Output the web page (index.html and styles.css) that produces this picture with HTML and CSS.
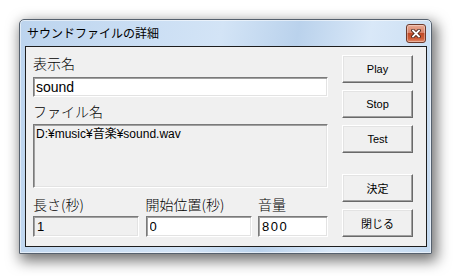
FILE: index.html
```html
<!DOCTYPE html>
<html lang="ja">
<head>
<meta charset="utf-8">
<title>サウンドファイルの詳細</title>
<link rel="stylesheet" href="styles.css">
</head>
<body>
<div class="window">
  <div class="titlebar">
    <span class="title">サウンドファイルの詳細</span>
    <button class="close" aria-label="閉じる">
      <svg width="10" height="9" viewBox="0 0 10 9">
        <path d="M2 1.5 L8 7.5 M8 1.5 L2 7.5" stroke="#4a2418" stroke-width="3.6" stroke-linecap="square"/>
        <path d="M2 1.5 L8 7.5 M8 1.5 L2 7.5" stroke="#ffffff" stroke-width="1.8" stroke-linecap="square"/>
      </svg>
    </button>
  </div>
  <div class="client">
    <div class="main">
      <div class="label">表示名</div>
      <input class="field name" type="text" value="sound">
      <div class="label label-file">ファイル名</div>
      <textarea class="field path" readonly>D:¥music¥音楽¥sound.wav</textarea>
      <div class="row">
        <div class="cell">
          <div class="label">長さ(秒)</div>
          <input class="field num ro" type="text" value="1" readonly>
        </div>
        <div class="cell">
          <div class="label">開始位置(秒)</div>
          <input class="field num" type="text" value="0">
        </div>
        <div class="cell">
          <div class="label">音量</div>
          <input class="field num" type="text" value="800">
        </div>
      </div>
    </div>
    <div class="buttons">
      <button class="btn">Play</button>
      <button class="btn">Stop</button>
      <button class="btn btn-sep">Test</button>
      <button class="btn">決定</button>
      <button class="btn">閉じる</button>
    </div>
  </div>
</div>
</body>
</html>
```
FILE: styles.css
```css
html, body {
  margin: 0;
  padding: 0;
}
body {
  width: 455px;
  height: 276px;
  overflow: hidden;
  background: #ffffff;
  font-family: "Liberation Sans", "Noto Sans CJK JP", sans-serif;
}
.window {
  box-sizing: border-box;
  margin: 19px 0 0 19px;
  width: 413px;
  height: 235px;
  border: 1px solid #56616e;
  border-radius: 5px 5px 0 0;
  padding: 0 4px 6px 5px;
  display: flex;
  flex-direction: column;
  background: linear-gradient(100deg, #bcd4ee 0%, #c9ddf3 25%, #d3e4f6 45%, #bad2ec 62%, #d9e8f8 78%, #c4daf1 100%);
  box-shadow: inset 0 0 0 1px rgba(255,255,255,0.55), 3px 5px 14px 2px rgba(0,0,0,0.55);
}
.titlebar {
  height: 26px;
  flex: none;
  display: flex;
  align-items: center;
  justify-content: space-between;
}
.title {
  padding-left: 2px;
  font-family: "Noto Sans CJK JP", sans-serif;
  font-size: 12px;
  color: #000;
  line-height: 16px;
}
.close {
  box-sizing: border-box;
  width: 20px;
  height: 19px;
  margin: 1px 1px 0 0;
  padding: 0;
  border: 1px solid #6e3a2c;
  border-radius: 3px;
  background: linear-gradient(#e9ab95 0%, #d8826a 45%, #c04a28 50%, #cf5c38 80%, #e49070 100%);
  display: flex;
  align-items: center;
  justify-content: center;
  box-shadow: inset 0 0 0 1px rgba(255,255,255,0.35);
}
.client {
  flex: 1;
  border: 1px solid #1e1e1e;
  background: #f0f0f0;
  display: flex;
  padding: 0 13px 0 7px;
}
.main {
  width: 295px;
  padding-top: 6px;
  display: flex;
  flex-direction: column;
}
.label {
  font-family: "Noto Sans CJK JP", sans-serif;
  font-weight: 300;
  font-size: 14px;
  line-height: 20px;
  height: 20px;
  color: #000;
  white-space: nowrap;
}
.field {
  box-sizing: border-box;
  margin: 0;
  font-family: "Liberation Sans", "Noto Sans CJK JP", sans-serif;
  color: #000;
  background: #ffffff;
  border: 1px solid;
  border-color: #7a7a7a #ffffff #ffffff #7a7a7a;
  box-shadow: inset 1px 1px 0 #a0a0a0, inset -1px -1px 0 #e3e3e3;
  outline: none;
}
.name {
  margin-top: 4px;
  height: 20px;
  width: 295px;
  padding: 0 2px;
  font-size: 14px;
}
.label-file {
  margin-top: 4px;
}
.path {
  margin-top: 3px;
  height: 64px;
  width: 295px;
  padding: 2px 2px;
  font-size: 12px;
  line-height: 14px;
  resize: none;
  background: #f0f0f0;
  overflow: hidden;
}
.row {
  margin-top: 6px;
  display: grid;
  grid-template-columns: 106px 106px 70px;
  justify-content: space-between;
}
.cell {
  display: flex;
  flex-direction: column;
}
.num {
  margin-top: 2px;
  height: 21px;
  width: 100%;
  padding: 0 3px;
  font-size: 13px;
  letter-spacing: 1.5px;
}
.ro {
  background: #f0f0f0;
}
.buttons {
  margin-left: 14px;
  width: 71px;
  padding-top: 8px;
  display: flex;
  flex-direction: column;
}
.btn {
  box-sizing: border-box;
  width: 71px;
  height: 28px;
  margin: 0 0 7px 0;
  padding: 0;
  font-family: "Liberation Sans", "Noto Sans CJK JP", sans-serif;
  font-size: 11px;
  color: #000;
  background: #f0f0f0;
  border: 1px solid;
  border-color: #ffffff #696969 #696969 #ffffff;
  box-shadow: inset -1px -1px 0 #a0a0a0, inset 1px 1px 0 #e3e3e3;
}
.btn-sep {
  margin-bottom: 21px;
}
```
